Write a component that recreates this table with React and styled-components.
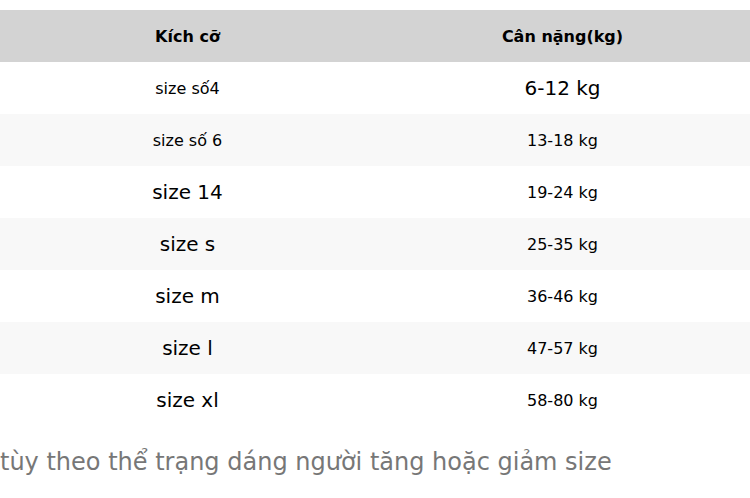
import React from "react";
import styled, { createGlobalStyle } from "styled-components";

const GlobalStyle = createGlobalStyle`
  html, body {
    margin: 0;
    padding: 0;
    background: #ffffff;
  }
  body {
    font-family: "DejaVu Sans", "Noto Sans", sans-serif;
    color: #000;
  }
`;

const Page = styled.div`
  padding-top: 10px;
  width: 750px;
`;

const Table = styled.table`
  width: 100%;
  border-collapse: collapse;
  table-layout: fixed;
`;

const HeadCell = styled.th`
  height: 52px;
  padding: 0;
  background: #d3d3d3;
  font-size: 16px;
  font-weight: bold;
  text-align: center;
  vertical-align: middle;
`;

const Row = styled.tr`
  background: ${(p) => (p.$alt ? "#f8f8f8" : "#ffffff")};
`;

const Cell = styled.td`
  height: 52px;
  padding: 0;
  text-align: center;
  vertical-align: middle;
  font-size: ${(p) => (p.$big ? "20px" : "16px")};
`;

const Note = styled.p`
  margin: 22px 0 0;
  font-size: 24px;
  color: #777777;
  white-space: nowrap;
`;

const rows = [
  { size: "size số4", weight: "6-12 kg", bigSize: false, bigWeight: true },
  { size: "size số 6", weight: "13-18 kg", bigSize: false, bigWeight: false },
  { size: "size 14", weight: "19-24 kg", bigSize: true, bigWeight: false },
  { size: "size s", weight: "25-35 kg", bigSize: true, bigWeight: false },
  { size: "size m", weight: "36-46 kg", bigSize: true, bigWeight: false },
  { size: "size l", weight: "47-57 kg", bigSize: true, bigWeight: false },
  { size: "size xl", weight: "58-80 kg", bigSize: true, bigWeight: false },
];

const App = () => {
  return (
    <Page>
      <GlobalStyle />
      <Table>
        <thead>
          <tr>
            <HeadCell>Kích cỡ</HeadCell>
            <HeadCell>Cân nặng(kg)</HeadCell>
          </tr>
        </thead>
        <tbody>
          {rows.map((r, i) => (
            <Row key={r.size} $alt={i % 2 === 1}>
              <Cell $big={r.bigSize}>{r.size}</Cell>
              <Cell $big={r.bigWeight}>{r.weight}</Cell>
            </Row>
          ))}
        </tbody>
      </Table>
      <Note>tùy theo thể trạng dáng người tăng hoặc giảm size</Note>
    </Page>
  );
};

export default App;
